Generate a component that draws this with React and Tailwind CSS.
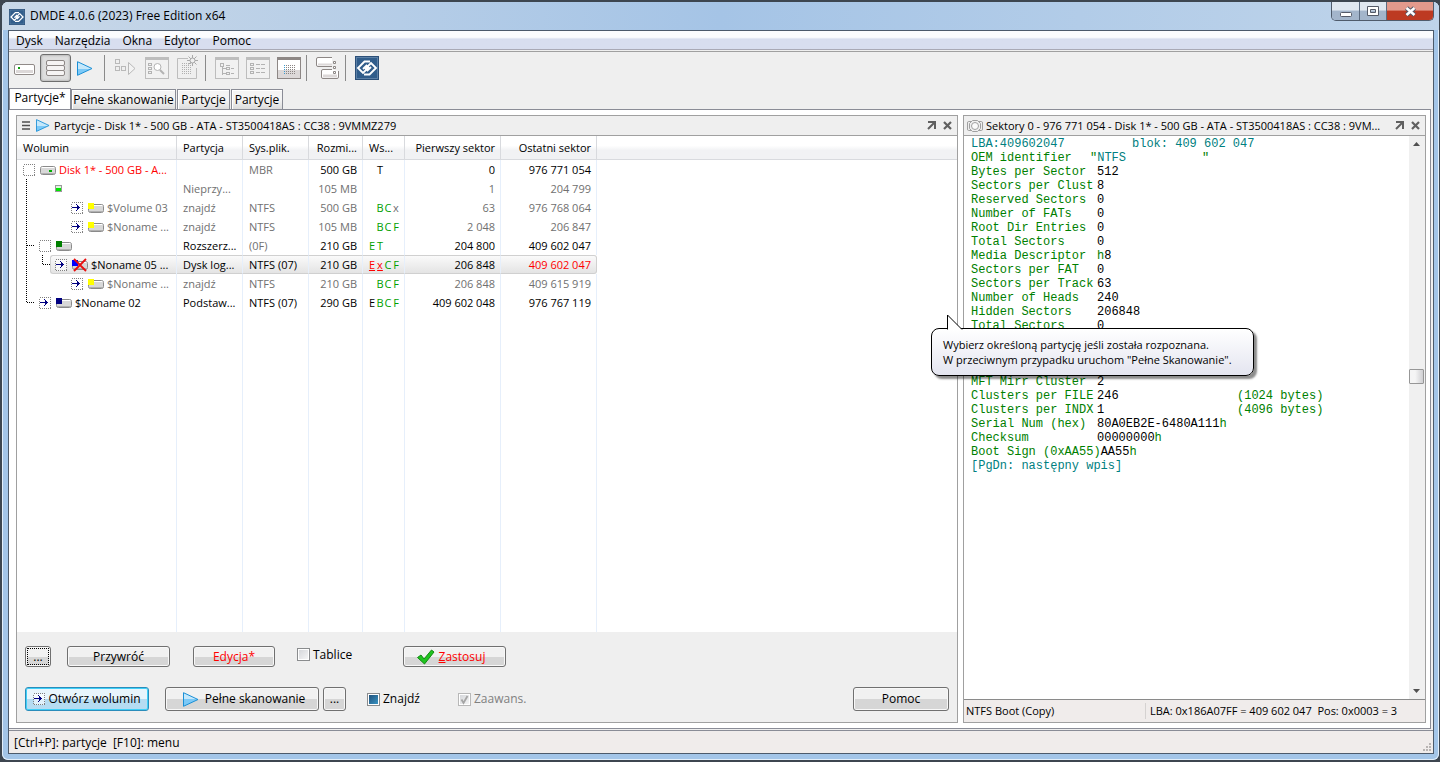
import { useEffect, useRef } from 'react';
import clsx from 'clsx';

const menu = ['Dysk', 'Narzędzia', 'Okna', 'Edytor', 'Pomoc'];

const columns = [
  { name: 'Wolumin', width: 'w-[160px]', cell: 'pl-1.5' },
  { name: 'Partycja', width: 'w-[66px]', cell: 'pl-1.5' },
  { name: 'Sys.plik.', width: 'w-[66px]', cell: 'pl-1.5' },
  { name: 'Rozmi...', width: 'w-[54px]', cell: 'pr-[5px] text-right' },
  { name: 'Ws...', width: 'w-[42px]', cell: 'pl-1.5' },
  { name: 'Pierwszy sektor', width: 'w-[96px]', cell: 'pr-[5px] text-right' },
  { name: 'Ostatni sektor', width: 'w-[96px]', cell: 'pr-[5px] text-right' },
];

// flags: one entry per character position, [char, colour]
const G = 'text-[#00a000]';
const R = 'text-[#ff0000] underline';

const volumes = [
  {
    level: 0,
    box: 'empty',
    icon: 'disk',
    name: 'Disk 1* - 500 GB - A...',
    nameColor: 'text-[#ff0000]',
    part: '',
    fs: 'MBR',
    fsGray: true,
    size: '500 GB',
    flags: [[''], ['T']],
    first: '0',
    last: '976 771 054',
  },
  {
    level: 1,
    box: null,
    icon: 'free',
    name: '',
    gray: true,
    part: 'Nieprzy...',
    fs: '',
    size: '105 MB',
    flags: [],
    first: '1',
    last: '204 799',
  },
  {
    level: 3,
    box: 'arrow',
    icon: '#ffff00',
    name: '$Volume 03',
    gray: true,
    part: 'znajdź',
    fs: 'NTFS',
    size: '500 GB',
    flags: [[''], ['B', G], ['C', G], ['x']],
    first: '63',
    last: '976 768 064',
  },
  {
    level: 3,
    box: 'arrow',
    icon: '#ffff00',
    name: '$Noname ...',
    gray: true,
    part: 'znajdź',
    fs: 'NTFS',
    size: '105 MB',
    flags: [[''], ['B', G], ['C', G], ['F', G]],
    first: '2 048',
    last: '206 847',
  },
  {
    level: 1,
    box: 'empty',
    icon: '#008000',
    name: '',
    part: 'Rozszerz...',
    fs: '(0F)',
    fsGray: true,
    size: '210 GB',
    flags: [['E', G], ['T', G]],
    first: '204 800',
    last: '409 602 047',
  },
  {
    level: 2,
    box: 'arrow',
    icon: '#0000ff',
    removed: true,
    selected: true,
    name: '$Noname 05 ...',
    part: 'Dysk log...',
    fs: 'NTFS (07)',
    size: '210 GB',
    flags: [['E', R], ['x', R], ['C', G], ['F', G]],
    first: '206 848',
    last: '409 602 047',
    lastColor: 'text-[#ff0000]',
  },
  {
    level: 3,
    box: 'arrow',
    icon: '#ffff00',
    name: '$Noname ...',
    gray: true,
    part: 'znajdź',
    fs: 'NTFS',
    size: '210 GB',
    flags: [[''], ['B', G], ['C', G], ['F', G]],
    first: '206 848',
    last: '409 615 919',
  },
  {
    level: 1,
    box: 'arrow',
    icon: '#000080',
    name: '$Noname 02',
    part: 'Podstaw...',
    fs: 'NTFS (07)',
    size: '290 GB',
    flags: [['E'], ['B', G], ['C', G], ['F', G]],
    first: '409 602 048',
    last: '976 767 119',
  },
];

const bootTop = [
  ['Bytes per Sector', '512'],
  ['Sectors per Clust', '8'],
  ['Reserved Sectors', '0'],
  ['Number of FATs', '0'],
  ['Root Dir Entries', '0'],
  ['Total Sectors', '0'],
  ['Media Descriptor', <><i className="not-italic text-[#008000]">h</i>8</>],
  ['Sectors per FAT', '0'],
  ['Sectors per Track', '63'],
  ['Number of Heads', '240'],
  ['Hidden Sectors', '206848'],
  ['Total Sectors', '0'],
];

const bootBottom = [
  ['MFT Mirr Cluster', '2'],
  ['Clusters per FILE', '246', '(1024 bytes)'],
  ['Clusters per INDX', '1', '(4096 bytes)'],
  ['Serial Num (hex)', <>80A0EB2E-6480A111<i className="not-italic text-[#008000]">h</i></>],
  ['Checksum', <>00000000<i className="not-italic text-[#008000]">h</i></>],
  ['Boot Sign (0xAA55)', <>AA55<i className="not-italic text-[#008000]">h</i></>],
];

const indents = ['pl-0', 'pl-4', 'pl-8', 'pl-12'];

function Logo({ size }) {
  return (
    <svg width={size} height={size} viewBox="0 0 24 24">
      <rect width="24" height="24" fill="#2b4f78" />
      <rect x="1.5" y="1.5" width="21" height="21" fill="#315d8b" stroke="#5c80a6" />
      <g fill="none" stroke="#fff" strokeWidth="1.9">
        <path d="M15 5.5 L9.5 5.5 L3 12 L8 17 L13.5 11.5 L11.5 9.5 L8 13" />
        <path d="M9 18.5 L14.5 18.5 L21 12 L16 7 L10.5 12.5 L12.5 14.5 L16 11" />
      </g>
    </svg>
  );
}

function Play({ className }) {
  return (
    <svg className={className} width="16" height="15" viewBox="0 0 16 15">
      <defs>
        <linearGradient id="play" x1="0" y1="0" x2="0" y2="1">
          <stop offset="0.5" stopColor="#c5e8fb" />
          <stop offset="0.5" stopColor="#7cc9f7" />
        </linearGradient>
      </defs>
      <path d="M0.5 0.7 L15 7.5 L0.5 14.3 Z" fill="url(#play)" stroke="#1a8fd6" />
    </svg>
  );
}

function ArrowBox({ empty }) {
  return (
    <svg className="shrink-0" width="12" height="12" viewBox="0 0 12 12">
      <rect x="0.5" y="0.5" width="11" height="11" fill="#fff" fillOpacity="0.6" stroke="#808080" strokeDasharray="1 1" shapeRendering="crispEdges" />
      {!empty && (
        <path
          d="M1 5h7v1h-7zM6 3h1v5h-1zM7 4h1v3h-1zM8 5h1v1h-1zM5 2h1v1h-1zM5 8h1v1h-1z"
          fill="#000080"
          shapeRendering="crispEdges"
        />
      )}
    </svg>
  );
}

function VolumeIcon({ kind, removed }) {
  if (kind === 'free') {
    return (
      <svg width="16" height="12" viewBox="0 0 16 12">
        <rect x="0.5" y="2.5" width="6" height="6" fill="#d8f8d8" stroke="#9a9a9a" />
        <rect x="1" y="5" width="5" height="3" fill="#00e800" />
      </svg>
    );
  }
  return (
    <svg className="shrink-0" width="16" height="14" viewBox="0 0 16 14">
      <rect x="0.5" y="3.5" width="15" height="8" rx="2" fill="#d8d8d8" stroke="#8a8a8a" />
      <path d="M2 10.5h12" stroke="#b0b0b0" />
      <path d="M1.5 4.5h13" stroke="#fff" />
      {kind === 'disk' ? (
        <rect x="9" y="7" width="3" height="2" fill="#00b000" />
      ) : (
        <rect x="0" y="2" width="6" height="6" fill={kind} />
      )}
      {removed && (
        <path d="M2 1 L14 13 M14 1 L2 13" stroke="#e81010" strokeWidth="1.8" />
      )}
    </svg>
  );
}

function Window24({ faded, children }) {
  return (
    <svg width="24" height="22" viewBox="0 0 24 22" shapeRendering="crispEdges">
      <rect x="0.5" y="0.5" width="23" height="21" fill={faded ? '#f1f1f1' : '#fff'} stroke={faded ? '#bdbdbd' : '#8d8785'} />
      <rect x="0" y="0" width="24" height="3" fill={faded ? '#bdbdbd' : '#8d8785'} />
      {!faded && <rect x="1" y="13" width="22" height="8" fill="#dcd8d8" />}
      {children}
    </svg>
  );
}

const dots = (x0, y0, cols, rows) =>
  Array.from({ length: cols * rows }, (_, i) => [x0 + (i % cols) * 2, y0 + Math.floor(i / cols) * 2]);

function ToolButton({ label, active, disabled, children }) {
  return (
    <button
      aria-label={label}
      disabled={disabled}
      className={clsx(
        'flex h-7 w-[31px] items-center justify-center',
        active &&
          'rounded-[3px] border border-[#6e6e6e] bg-[#dedede] shadow-[inset_0_0_2px_1px_#bdbdbd]',
      )}
    >
      {children}
    </button>
  );
}

function Divider() {
  return (
    <div className="flex w-2 pl-0.5">
      <div className="h-6.5 w-px bg-[#8a8a8a]" />
    </div>
  );
}

function Toolbar() {
  return (
    <div className="flex h-9 items-center bg-[#efefef] pb-1">
      <ToolButton label="Dysk">
        <svg width="21" height="12" viewBox="0 0 21 12" className="mt-1">
          <rect x="0.5" y="0.5" width="20" height="10" rx="1.5" fill="#fff" stroke="#908a88" />
          <rect x="2" y="6" width="17" height="3" fill="#dcd8d8" />
          <rect x="4" y="3" width="2" height="2" fill="#10a010" />
        </svg>
      </ToolButton>
      <ToolButton label="Partycje" active>
        <svg width="19" height="17" viewBox="0 0 19 17">
          {[0.5, 5.5, 10.5].map(y => (
            <rect key={y} x="0.5" y={y} width="18" height="5" rx="1.5" fill="#f6f4f4" stroke="#8d8785" />
          ))}
        </svg>
      </ToolButton>
      <ToolButton label="Pełne skanowanie">
        <Play className="mr-1" />
      </ToolButton>
      <Divider />
      <ToolButton label="Skanuj" disabled>
        <svg width="21" height="18" viewBox="0 0 21 18" fill="none" stroke="#b9b9b9">
          <rect x="0.5" y="0.5" width="4" height="4" />
          <rect x="0.5" y="7.5" width="4" height="4" />
          <rect x="6.5" y="7.5" width="4" height="4" />
          <path d="M13.5 3.5 L20 9.5 L13.5 15.5 Z" fill="#f3f3f3" />
        </svg>
      </ToolButton>
      <ToolButton label="Szukaj" disabled>
        <Window24 faded>
          <g fill="none" stroke="#b3b3b3">
            <path d="M3.5 6.5h3v2h-3zM3.5 10.5h3v2h-3zM3.5 14.5h3v2h-3z" />
            <circle cx="12.5" cy="10" r="3.5" shapeRendering="auto" fill="#fff" />
            <path d="M15 13l4 4" strokeWidth="2" shapeRendering="auto" />
          </g>
        </Window24>
      </ToolButton>
      <ToolButton label="Nowy" disabled>
        <svg width="22" height="24" viewBox="0 0 22 24" className="-mt-0.5">
          <path d="M11 3.5H0.5v20h19V13" fill="none" stroke="#bdbdbd" />
          {dots(5, 8, 5, 6).map(([x, y]) => (
            <rect key={`${x}-${y}`} x={x} y={y} width="1" height="1" fill="#b0b0b0" />
          ))}
          <path d="M15.5 0v11M10 5.5h11M11.5 1.5l8 8M19.5 1.5l-8 8" stroke="#a8a8a8" />
          <circle cx="15.5" cy="5.5" r="2.5" fill="#efefef" stroke="#a8a8a8" />
        </svg>
      </ToolButton>
      <Divider />
      <ToolButton label="Drzewo" disabled>
        <Window24 faded>
          <path d="M5.5 6.5h3v3h-3zM7.5 10v7.5M8 11.5h3M8 16.5h3M11.5 10.5h3v2h-3zM11.5 15.5h3v2h-3zM11 8h4M16 11.5h3M16 16.5h3" fill="none" stroke="#b3b3b3" />
        </Window24>
      </ToolButton>
      <ToolButton label="Lista" disabled>
        <Window24 faded>
          <path d="M4.5 6.5h3v2h-3zM4.5 10.5h3v2h-3zM4.5 14.5h3v2h-3zM10 7.5h4M10 11.5h4M10 15.5h4M15 7.5h4M15 11.5h4M15 15.5h4" fill="none" stroke="#b3b3b3" />
        </Window24>
      </ToolButton>
      <ToolButton label="Edytor">
        <Window24>
          {dots(7, 8, 6, 5).map(([x, y]) => (
            <rect key={`${x}-${y}`} x={x} y={y} width="1" height="1" fill={x < 9 ? '#3a9bd0' : '#8a8482'} />
          ))}
        </Window24>
      </ToolButton>
      <Divider />
      <ToolButton label="Okna">
        <svg width="24" height="22" viewBox="0 0 24 22" stroke="#8d8785" fill="none">
          <path d="M16 0.5H2Q0.5 0.5 0.5 2v6Q0.5 9.5 2 9.5h14" fill="#fff" />
          <path d="M2 7.5h14" stroke="#dcd8d8" strokeWidth="2" />
          <path d="M16 12.5H7Q5.5 12.5 5.5 14v6Q5.5 21.5 7 21.5h14Q22.5 21.5 22.5 20v-6" fill="#fff" />
          <path d="M7 19h14" stroke="#dcd8d8" strokeWidth="3" />
          <path d="M17.5 4.5h2v2h-2zM17.5 9.5h2v2h-2zM17.5 14.5h2v2h-2z" fill="#fff" />
        </svg>
      </ToolButton>
      <Divider />
      <ToolButton label="DMDE">
        <Logo size={24} />
      </ToolButton>
    </div>
  );
}

function Tab({ active, className, children }) {
  return (
    <button
      className={clsx(
        'shrink-0 border border-b-0 border-[#8a8c96] text-center whitespace-nowrap',
        active
          ? '-mb-px h-[22px] bg-white pb-1'
          : 'mr-px h-5 bg-linear-to-b from-[#f4f4f4] from-50% to-[#dcdcdc] shadow-[inset_1px_1px_0_#fff]',
        className,
      )}
    >
      {children}
    </button>
  );
}

function PanelTitle({ icon, children }) {
  return (
    <div className="flex h-5 shrink-0 items-center border-b border-[#a0a0a0] bg-[#efefef] pr-0.5 text-[11px]">
      {icon}
      <span className="min-w-0 flex-1 truncate">{children}</span>
      <button aria-label="Odepnij" className="flex w-4 justify-center">
        <svg width="9" height="9" viewBox="0 0 9 9" fill="none" stroke="#606060" strokeWidth="2">
          <path d="M1 1h7v7M8 1L1 8" />
        </svg>
      </button>
      <button aria-label="Zamknij panel" className="flex w-4 justify-center">
        <svg width="9" height="9" viewBox="0 0 9 9" stroke="#606060" strokeWidth="2.2">
          <path d="M1 1l7 7M8 1L1 8" />
        </svg>
      </button>
    </div>
  );
}

function Button({ className, primary, children }) {
  return (
    <button
      className={clsx(
        'flex shrink-0 items-center justify-center rounded-[3px] border',
        primary
          ? 'border-[#2a8dbb] bg-linear-to-b from-[#e8f5fc] from-50% to-[#b5dcf2] to-50% shadow-[inset_0_0_0_1px_#3fd0f8]'
          : 'border-[#707070] bg-linear-to-b from-[#f1f1f1] from-50% to-[#d6d6d6] to-50% shadow-[inset_0_0_0_1px_#f8f8f8]',
        className,
      )}
    >
      {children}
    </button>
  );
}

function Check({ label, className, mixed, ...rest }) {
  const ref = useRef(null);

  useEffect(() => {
    if (mixed) ref.current.indeterminate = true;
  }, [mixed]);

  return (
    <label className={clsx('flex items-center gap-[3px]', rest.disabled && 'text-[#808080]', className)}>
      <span className="relative flex">
        <input
          ref={ref}
          type="checkbox"
          className={clsx(
            'size-[13px] appearance-none border shadow-[inset_0_0_0_1px_#fff]',
            rest.disabled ? 'border-[#b8b8b8]' : 'border-[#8a8c8e]',
            mixed
              ? 'bg-linear-to-br from-[#1d4a75] to-[#3c9ccb]'
              : 'bg-linear-to-br from-[#d2d4d8] to-[#f8f8f8]',
          )}
          {...rest}
        />
        {rest.defaultChecked && (
          <svg className="pointer-events-none absolute inset-0" width="13" height="13" viewBox="0 0 13 13">
            <path d="M3.5 6.5l2 3.5 4-7" fill="none" stroke="#a5a5a5" strokeWidth="1.8" />
          </svg>
        )}
      </span>
      {label}
    </label>
  );
}

function VolumeRow({ row }) {
  const color = row.gray ? 'text-[#707070]' : 'text-black';
  const line = 'h-[19px] border-r border-[#e6effb] p-0 whitespace-nowrap';
  const sel = row.selected
    ? 'border-y border-y-[#d0d0d0] bg-linear-to-b from-[#fafafa] to-[#e4e4e4]'
    : '';

  return (
    <tr className={color}>
      <td className={clsx(line, 'pl-1.5')}>
        <div className={indents[row.level]}>
          <div
            className={clsx(
              'flex h-[19px] items-center',
              row.selected && '-ml-[5px] rounded-l-[3px] border-l border-l-[#d0d0d0] pl-1',
              sel,
            )}
          >
            {row.box && <ArrowBox empty={row.box === 'empty'} />}
            <span className={clsx('flex', row.box ? 'ml-[5px]' : 'ml-4')}>
              <VolumeIcon kind={row.icon} removed={row.removed} />
            </span>
            <span className={clsx('ml-[3px]', row.nameColor)}>{row.name}</span>
          </div>
        </div>
      </td>
      <td className={clsx(line, sel, 'pl-1.5')}>{row.part}</td>
      <td className={clsx(line, sel, 'pl-1.5', row.fsGray && 'text-[#707070]')}>{row.fs}</td>
      <td className={clsx(line, sel, 'pr-[5px] text-right')}>{row.size}</td>
      <td className={clsx(line, sel, 'pl-[5px]')}>
        <div className="flex">
          {row.flags.map(([ch, tone], i) => (
            <span key={i} className={clsx('w-2 text-center', tone)}>
              {ch}
            </span>
          ))}
        </div>
      </td>
      <td className={clsx(line, sel, 'pr-[5px] text-right')}>{row.first}</td>
      <td className={clsx(line, sel, 'pr-[5px] text-right', row.selected && 'rounded-r-[3px] border-r-[#d0d0d0]', row.lastColor)}>
        {row.last}
      </td>
      <td className="p-0" />
    </tr>
  );
}

function VolumeTable() {
  return (
    <div className="relative flex flex-1 flex-col bg-white text-[11px]">
      <table className="w-full flex-1 table-fixed border-separate border-spacing-0">
        <colgroup>
          {columns.map(c => (
            <col key={c.name} className={c.width} />
          ))}
          <col />
        </colgroup>
        <thead>
          <tr className="bg-linear-to-b from-white from-40% to-[#f1f2f4] to-60%">
            {columns.map(c => (
              <th
                key={c.name}
                className={clsx('h-6 border-r border-b border-[#d8dade] p-0 font-normal whitespace-nowrap', c.cell, !c.cell.includes('right') && 'text-left')}
              >
                {c.name}
              </th>
            ))}
            <th className="border-b border-[#d8dade] p-0" aria-label="Puste" />
          </tr>
        </thead>
        <tbody>
          {volumes.map(row => (
            <VolumeRow key={row.first + row.last} row={row} />
          ))}
        </tbody>
      </table>
      {/* column lines run on below the last row */}
      <div className="flex h-[320px] grow-[999]">
        {columns.map(c => (
          <div key={c.name} className={clsx('shrink-0 border-r border-[#e6effb]', c.width)} />
        ))}
      </div>
      <svg className="pointer-events-none absolute top-6 left-0" width="40" height="152" viewBox="0 0 40 152" fill="none" stroke="#000" strokeDasharray="1 1" shapeRendering="crispEdges">
        <path d="M9.5 19v123M9.5 85.5h8M9.5 142.5h8M25.5 95v10M25.5 104.5h8" />
      </svg>
    </div>
  );
}

function BootLine({ label, value, note }) {
  return (
    <div className="flex">
      <span className="min-w-[126px] shrink-0">{label}</span>
      <span className="w-[140px] text-black">{value}</span>
      {note}
    </div>
  );
}

function SectorPanel() {
  return (
    <section className="flex w-[463px] shrink-0 flex-col border border-[#a0a0a0] bg-white">
      <PanelTitle
        icon={
          <svg className="mx-[3px] shrink-0" width="16" height="12" viewBox="0 0 16 12" fill="none" stroke="#a0a0a0">
            <path d="M4 1.5h-2.5Q0.5 1.5 0.5 3v6Q0.5 10.5 1.5 10.5h2.5M12 1.5h2.5Q15.5 1.5 15.5 3v6Q15.5 10.5 14.5 10.5h-2.5" />
            <path d="M5.5 0.5h5l3 3v5l-3 3h-5l-3-3v-5z" />
            <circle cx="8" cy="6" r="3.5" fill="#fafafa" />
          </svg>
        }
      >
        Sektory 0 - 976 771 054 - Disk 1* - 500 GB - ATA - ST3500418AS : CC38 : 9VM...
      </PanelTitle>
      <div className="flex flex-1">
        <div className="min-w-0 flex-1 pt-px pl-[7px] font-['Liberation_Mono',monospace] text-[12px] leading-[14px] whitespace-pre text-[#008000]">
          <div className="flex text-[#008080]">
            <span className="w-[161px]">LBA:409602047</span>
            <span>blok: 409 602 047</span>
          </div>
          <div className="flex">
            <span className="w-[119px]">OEM identifier</span>
            <span className="w-[112px]">
              "<i className="text-[#008080] not-italic">NTFS</i>
            </span>
            "
          </div>
          {bootTop.map(([label, value], i) => (
            <BootLine key={i} label={label} value={value} />
          ))}
          <div className="mt-[42px]">
            {bootBottom.map(([label, value, note]) => (
              <BootLine key={label} label={label} value={value} note={note} />
            ))}
          </div>
          <div className="text-[#008080]">[PgDn: następny wpis]</div>
        </div>
        <div className="flex w-4 flex-col items-start bg-[#f0f0f0] py-1.5">
          <svg className="ml-1" width="7" height="4" viewBox="0 0 7 4">
            <path d="M0 4l3.5-4L7 4z" fill="#505050" />
          </svg>
          <div className="flex flex-1 flex-col">
            <div className="grow-[221]" />
            <div className="h-[15px] w-[15px] rounded-[1px] border border-[#979797] bg-linear-to-r from-[#f5f5f5] from-40% to-[#cfcfd2]" />
            <div className="grow-[302]" />
          </div>
          <svg className="ml-1" width="7" height="4" viewBox="0 0 7 4">
            <path d="M0 0l3.5 4L7 0z" fill="#505050" />
          </svg>
        </div>
      </div>
      <div className="flex h-[23px] items-center border-t border-[#8a8a8a] bg-[#f0eceb] text-[11px]">
        <span className="w-[182px] border-r border-[#d5d2d1] pl-0.5">NTFS Boot (Copy)</span>
        <span className="pl-1 whitespace-pre">LBA: 0x186A07FF = 409 602 047  Pos: 0x0003 = 3</span>
      </div>
    </section>
  );
}

function Hint() {
  return (
    <div
      role="tooltip"
      className="absolute top-[212px] left-[calc(100%-26px)] z-10 w-[323px] rounded-[8px] border border-black bg-linear-to-b from-white to-[#e4e5f0] px-[11px] py-2 text-[11px] leading-[15px] whitespace-nowrap shadow-[3px_3px_2px_rgba(0,0,0,0.45)]"
    >
      <svg className="absolute -top-[15px] left-[15px]" width="17" height="16" viewBox="0 0 17 16">
        <path d="M0.5 15.5V1L15 15.5" fill="#fff" stroke="#000" />
      </svg>
      Wybierz określoną partycję jeśli została rozpoznana.
      <br />
      W przeciwnym przypadku uruchom "Pełne Skanowanie".
    </div>
  );
}

function PartitionPanel() {
  return (
    <section className="relative flex min-w-0 flex-1 flex-col border border-[#a0a0a0]">
      <PanelTitle
        icon={
          <>
            <svg className="mx-1 shrink-0" width="10" height="9" viewBox="0 0 10 9" stroke="#505050" strokeWidth="1.5">
              <path d="M1 1h8M1 4.5h8M1 8h8" />
            </svg>
            <Play className="mr-[3px] h-[13px] w-4 shrink-0" />
          </>
        }
      >
        Partycje - Disk 1* - 500 GB - ATA - ST3500418AS : CC38 : 9VMMZ279
      </PanelTitle>
      <VolumeTable />
      <div className="flex h-[90px] shrink-0 flex-col gap-5 bg-[#efefef] px-2 pt-3.5">
        <div className="flex items-center">
          <Button className="h-[21px] w-[26px]">
            <span className="flex h-[17px] w-[22px] items-center justify-center border border-dotted border-black">...</span>
          </Button>
          <Button className="ml-4 h-[21px] w-[103px]">Przywróć</Button>
          <Button className="ml-[23px] h-[21px] w-[82px] text-[#ff0000]">Edycja*</Button>
          <Check label="Tablice" className="mb-1 ml-[22px] w-[106px] shrink-0" />
          <Button className="h-[21px] w-[103px] gap-1 pr-2 text-[#ff0000]">
            <svg width="19" height="16" viewBox="0 0 19 16">
              <path d="M1.5 8.5l3.5-2.5 3 4L15.5 1l2.5 2L8.5 15z" fill="#1fc41f" stroke="#128a12" />
            </svg>
            <span>
              <u>Z</u>astosuj
            </span>
          </Button>
        </div>
        <div className="flex items-center">
          <Button primary className="h-6 w-[124px] gap-[3px]">
            <ArrowBox />
            Otwórz wolumin
          </Button>
          <Button className="ml-4 h-6 w-[154px] gap-1.5 pl-1">
            <Play />
            Pełne skanowanie
          </Button>
          <Button className="ml-1 h-6 w-[23px]">...</Button>
          <Check label="Znajdź" mixed className="ml-[21px] w-[91px] shrink-0" />
          <Check label="Zaawans." defaultChecked disabled />
          <Button className="ml-auto h-6 w-24">Pomoc</Button>
        </div>
      </div>
      <Hint />
    </section>
  );
}

function TitleBar() {
  return (
    <header className="flex h-7 items-start bg-linear-to-r from-[#c9d8e8] via-[#a5c4e6] to-[#bfd4ea]">
      <div className="mt-[7px] ml-[7px]">
        <Logo size={16} />
      </div>
      <h1 className="mt-1.5 ml-[5px] flex-1">DMDE 4.0.6 (2023) Free Edition x64</h1>
      <div className="mr-[5px] flex h-[19px] overflow-hidden rounded-b-[5px] border border-t-0 border-[#4f5b6b] text-white">
        <button aria-label="Minimalizuj" className="flex w-7 items-center justify-center border-r border-[#5b6b80] bg-linear-to-b from-[#dfe7f0] from-45% to-[#a3b5cb] to-50%">
          <svg width="12" height="12" viewBox="0 0 12 12">
            <rect x="0.5" y="7.5" width="11" height="4" rx="1" fill="#fff" stroke="#545a68" />
          </svg>
        </button>
        <button aria-label="Przywróć" className="flex w-[27px] items-center justify-center border-r border-[#5b6b80] bg-linear-to-b from-[#dfe7f0] from-45% to-[#a3b5cb] to-50%">
          <svg width="12" height="11" viewBox="0 0 12 11">
            <path d="M0.5 0.5h11v9h-11zM3.5 3.5v3h5v-3z" fill="#fff" fillRule="evenodd" stroke="#545a68" />
          </svg>
        </button>
        <button aria-label="Zamknij" className="flex w-[46px] items-center justify-center bg-linear-to-b from-[#e39a8c] from-45% to-[#bd3a22] to-50%">
          <svg width="13" height="11" viewBox="0 0 13 11">
            <path d="M2.5 2l8 7M10.5 2l-8 7" stroke="#545a68" strokeWidth="4.5" />
            <path d="M2.5 2l8 7M10.5 2l-8 7" stroke="#fff" strokeWidth="2.5" />
          </svg>
        </button>
      </div>
    </header>
  );
}

export default function App() {
  return (
    <div className="flex min-h-screen flex-col bg-[#3d4650] pt-0.5 pr-px pb-0.5 pl-0.5 font-['Open_Sans','Noto_Sans',sans-serif] text-[12px] leading-4 text-black">
      <div className="flex flex-1 flex-col overflow-hidden rounded-[6px] bg-[#a3c5e8] shadow-[inset_0_0_0_1px_#e2eefa]">
        <TitleBar />
        <main className="mr-[5px] mb-[6px] ml-[6px] flex flex-1 flex-col border border-[#4c5a6b] bg-[#efefef]">
          <nav className="flex h-[19px] items-center border-b border-[#a9a9b5] bg-linear-to-b from-[#fbfcfe] from-35% to-[#d8deef] to-45% pt-0.5">
            {menu.map(item => (
              <button key={item} className="px-1.5 first:pl-[7px]">
                {item}
              </button>
            ))}
          </nav>
          <div className="mt-px h-px bg-[#a0a0a0]" />
          <Toolbar />
          <div className="flex items-end">
            <Tab active className="w-[62px]">Partycje*</Tab>
            <Tab className="w-[105px]">Pełne skanowanie</Tab>
            <Tab className="w-[53px]">Partycje</Tab>
            <Tab className="w-[52px]">Partycje</Tab>
          </div>
          <div className="mr-0.5 flex flex-1 gap-[5px] border border-l-0 border-[#8a8c96] bg-white py-[5px] pr-1 pl-[7px]">
            <PartitionPanel />
            <SectorPanel />
          </div>
          <footer className="mt-px flex h-[23px] items-center border-t border-[#8a8c96] bg-[#f0eceb] pt-px pl-[5px]">
            <span className="flex-1 whitespace-pre">[Ctrl+P]: partycje  [F10]: menu</span>
            <svg className="self-end" width="12" height="12" viewBox="0 0 12 12" fill="#b8b4b3">
              <path d="M8 2h2v2H8zM8 5h2v2H8zM8 8h2v2H8zM5 5h2v2H5zM5 8h2v2H5zM2 8h2v2H2z" />
            </svg>
          </footer>
        </main>
      </div>
    </div>
  );
}
